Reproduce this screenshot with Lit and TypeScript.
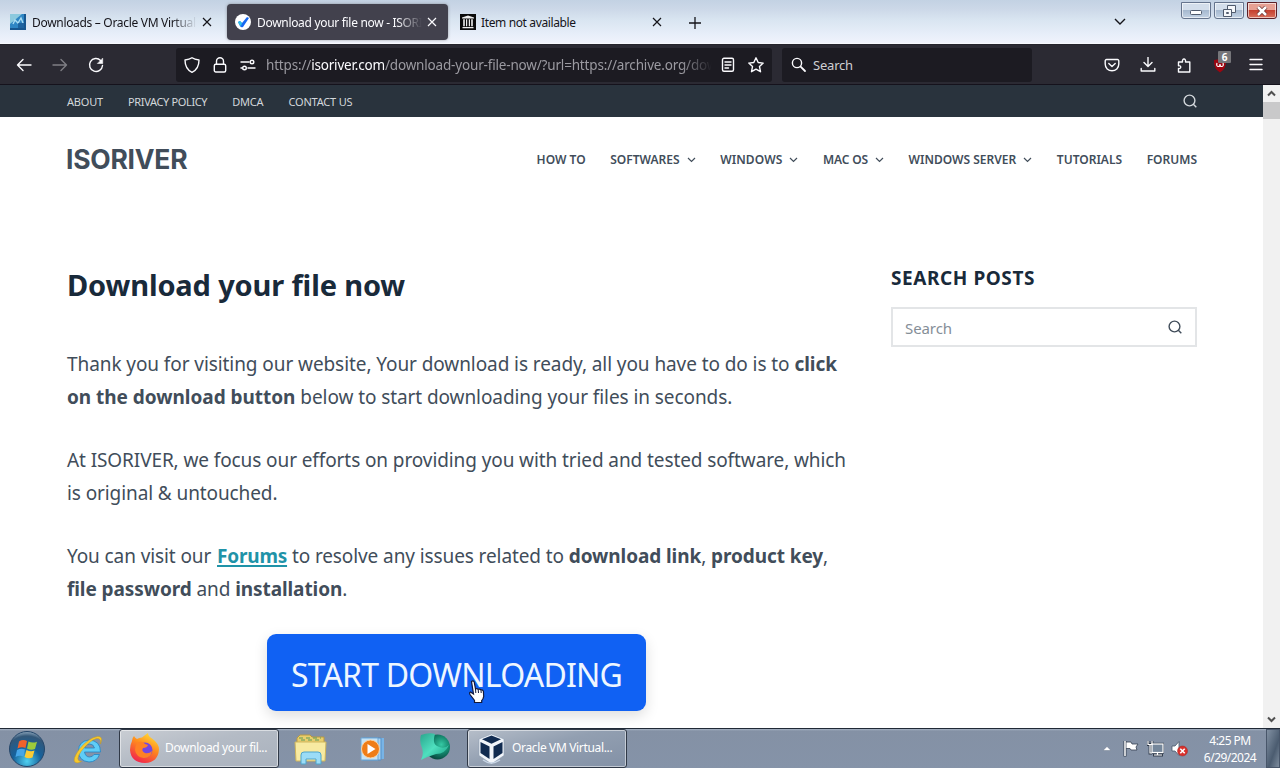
import { LitElement, html, css, svg } from "lit";
import { customElement } from "lit/decorators.js";

const cross = html`<svg class="x" viewBox="0 0 10 10" width="10" height="10"><path d="M1 1l8 8M9 1l-8 8" fill="none" stroke="currentColor" stroke-width="1.2"/></svg>`;
const line = (d: unknown, size = 16) => html`<svg viewBox="0 0 16 16" width=${size} height=${size} fill="none" stroke="currentColor" stroke-width="1.4" stroke-linecap="round" stroke-linejoin="round">${d}</svg>`;

@customElement("browser-tabs")
class BrowserTabs extends LitElement {
  static styles = css`
    :host { display: flex; height: 44px; box-sizing: border-box; padding-top: 4px; color: #15141a; position: relative;
      background: linear-gradient(180deg, #c3d2e3 0, #ccd8e8 9px, #d9e5f1 20px, #e7eef9 34px, #f0f3fc 43px, #fff 44px);
      font: 12px/18px "Noto Sans", sans-serif; }
    .tab { height: 36px; width: 221px; display: flex; align-items: center; box-sizing: border-box; border-radius: 4px; }
    .first { width: 227px; padding-left: 10px; }
    .active { background: #42414d; color: #fbfbfe; padding-left: 8px; box-shadow: 0 0 3px #5558; }
    .last { padding-left: 12px; width: 225px; }
    .icon { width: 16px; height: 16px; margin-right: 6px; flex: none; }
    .label { width: 165px; overflow: hidden; white-space: nowrap; letter-spacing: -0.31px; padding-top: 2px; }
    .last .label { letter-spacing: -0.37px; margin-left: -1px; }
    .fade { mask-image: linear-gradient(90deg, #000 140px, transparent 165px); }
    .x { margin-left: 5px; }
    .last .x { margin-left: 6px; }
    .plus { margin: 13px 0 0 16px; width: 12px; height: 12px; }
    .all { margin: 14px 0 0 auto; width: 12px; height: 8px; }
    .win { display: flex; gap: 3px; margin: -2px 3px 0 55px; }
    .btn { width: 30px; height: 17px; box-sizing: border-box; border: 1px solid #65748d; border-radius: 0 0 3px 3px; box-shadow: inset 0 0 0 1px #fff9;
      background: linear-gradient(#d3deeb 45%, #a6b9cf 50%, #c3d2e4); display: flex; align-items: center; justify-content: center; }
    .min { padding-top: 4px; }
    .close { border-color: #5b2027; background: linear-gradient(#e6a093 45%, #c5402f 50%, #d8705c); }
  `;
  render() {
    return html`
      <div class="tab first">
        <svg class="icon" viewBox="0 0 16 16"><rect width="16" height="16" fill="#2f86c4"/><path d="M0 0h12L0 10z" fill="#8cc9de"/><path d="M3 10l2-4 3 3 3-5 2 5" stroke="#a8dcf2" stroke-width="1.400" fill="none"/><path d="M8 9h8v7H8z" fill="#14508c" opacity=".65"/><path d="M14 0h2v16H0v-2h14z" fill="#17568f"/></svg>
        <span class="label fade">Downloads – Oracle VM VirtualBox</span>${cross}
      </div>
      <div class="tab active">
        <svg class="icon" viewBox="0 0 16 16"><circle cx="8" cy="8" r="8" fill="#fff"/><path d="M3 8l2-1 2 2 5-6 2 1-6 9q-2 1-3-1z" fill="#1768f2"/><path d="M3 8l2-1 2 2-1 3q-2-1-3-4z" fill="#2fc2e8"/></svg>
        <span class="label fade">Download your file now - ISORIVER</span>${cross}
      </div>
      <div class="tab last">
        <svg class="icon" viewBox="0 0 16 16"><rect width="16" height="16" fill="#0a0a0a"/><path d="M2 3.6L8 1.5l6 2.1v.9H2zM2.5 13h11v1.3h-11zM3.2 5.3h1.6v7H3.2zM6 5.3h1.2v7H6zM8.8 5.3H10v7H8.800zM11.2 5.300h1.600v7h-1.600z" fill="#eee"/></svg>
        <span class="label">Item not available</span>${cross}
      </div>
      <svg class="plus" viewBox="0 0 12 12"><path d="M6 0v12M0 6h12" stroke="#15141a" stroke-width="1.3"/></svg>
      <svg class="all" viewBox="0 0 12 8"><path d="M1 1l5 5 5-5" stroke="#15141a" stroke-width="1.4" fill="none"/></svg>
      <div class="win">
        <div class="btn min"><svg width="12" height="5" viewBox="0 0 12 5"><rect x=".5" y=".5" width="11" height="4" rx="1" fill="#fff" stroke="#505b6d"/></svg></div>
        <div class="btn"><svg width="13" height="12" viewBox="0 0 13 12" fill="#f6f8fb" stroke="#505b6d"><path d="M4.500 .5h8v7h-8z"/><path d="M.5 4.500h8v7h-8z"/><path d="M3.500 7.500h2v1h-2z"/></svg></div>
        <div class="btn close"><svg width="12" height="10" viewBox="0 0 12 10"><path d="M2 1l8 8M10 1L2 9" stroke="#69302f" stroke-width="4"/><path d="M2 1l8 8M10 1L2 9" stroke="#fff" stroke-width="2.500"/></svg></div>
      </div>`;
  }
}

@customElement("browser-toolbar")
class BrowserToolbar extends LitElement {
  static styles = css`
    :host { display: flex; align-items: center; height: 41px; box-sizing: border-box; border-top: 1px solid #25242c; border-bottom: 1px solid #15121c;
      background: #2b2a33; color: #fbfbfe; padding: 0 16px; font: 13.5px/20px "Noto Sans", sans-serif; }
    .group { display: flex; gap: 20px; align-items: center; }
    .off { opacity: .4; display: flex; }
    svg { display: block; flex: none; }
    .url { margin-left: 72px; width: 596px; height: 34px; box-sizing: border-box; padding: 0 8px; background: #1c1b22; border-radius: 3px; display: flex; align-items: center; }
    .url .group { gap: 12px; }
    .address { width: 446px; margin: 0 8px 0 10px; white-space: nowrap; overflow: hidden; color: #9b9aa1; letter-spacing: -0.175px; mask-image: linear-gradient(90deg, #000 415px, transparent 446px); }
    .address b { font-weight: 400; color: #fbfbfe; }
    .search { margin-left: 10px; width: 250px; height: 34px; box-sizing: border-box; padding-left: 9px; gap: 6px; background: #1c1b22; border-radius: 3px; display: flex; align-items: center; }
    .search span { font-size: 13px; color: #cfcfd3; letter-spacing: -0.2px; padding-top: 1px; }
    .right { margin: 0 0 0 auto; }
    .blocker { position: relative; display: flex; }
    .badge { position: absolute; left: 6px; top: -6px; width: 13px; height: 12px; background: #76767a; color: #fff; font: bold 10px/12px "Noto Sans", sans-serif; text-align: center; border-radius: 1px; }
  `;
  render() {
    return html`
      <div class="group">
        ${line(svg`<path d="M15 8H1.500M7 2.500L1.500 8 7 13.500"/>`)}
        <span class="off">${line(svg`<path d="M1 8h13.500M9 2.500l5.500 5.500L9 13.500"/>`)}</span>
        ${line(svg`<path d="M12.600 3.400A6.500 6.500 0 1 0 14.500 8.500"/><path d="M14.700 1.500v5h-5z" fill="currentColor" stroke-width=".6"/>`)}
      </div>
      <div class="url">
        <div class="group">
          ${line(svg`<path d="M8 .8c2 1.500 4.500 2 7 2.200 0 6-2 10-7 12.300C3 13 1 9 1 3c2.500-.2 5-.7 7-2.200z"/>`)}
          ${line(svg`<rect x="2.300" y="7.200" width="11.400" height="7.800" rx="1.500"/><path d="M4.500 7V4.300a3.500 3.500 0 0 1 7 0V7"/>`)}
          ${line(svg`<path d="M1 5h8M8 11h7M1 11h1"/><circle cx="12" cy="5" r="1.800"/><circle cx="4.500" cy="11" r="1.800"/>`)}
        </div>
        <span class="address">https://<b>isoriver.com</b>/download-your-file-now/?url=https://archive.org/download</span>
        <div class="group">
          ${line(svg`<rect x="2.500" y="1.300" width="11" height="13" rx="1.500"/><path d="M5 5h6M5 8h6M5 11h3.500"/>`)}
          ${line(svg`<path d="M8 .8l2.200 4.700 5 .6-3.700 3.500 1 5.100L8 12.200l-4.500 2.500 1-5.100L.8 6.100l5-.6z"/>`)}
        </div>
      </div>
      <div class="search">
        ${line(svg`<circle cx="6" cy="6" r="4.600"/><path d="M9.600 9.600L14 14" stroke-width="1.800"/>`)}
        <span>Search</span>
      </div>
      <div class="group right">
        ${line(svg`<path d="M2.500 2.500h11a1.300 1.300 0 0 1 1.300 1.300V7c0 4-3 6.800-6.800 6.800S1.200 11 1.200 7V3.800a1.300 1.300 0 0 1 1.300-1.300zM4.800 6.500L8 9.500l3.200-3"/>`)}
        ${line(svg`<path d="M8 .3v9M4 5.500l4 4 4-4M1.200 11.500v2.500h13.600v-2.500"/>`)}
        ${line(svg`<path d="M2.500 15V11.500c3 .7 3-3.500 0-2.800V5h4C5.700 1 10.300 1 9.500 5h4.300v10z"/>`)}
        <div class="blocker">
          <svg width="16" height="16" viewBox="0 0 16 16"><path d="M2 3q4 0 6-2 2 2 6 2 .5 9-6 12.500Q1.500 12 2 3z" fill="#9d0510"/><path d="M5 6q-1 3.500 1.500 3.500Q8 9.500 8 7q0 2.500 1.500 2.500Q12 9.500 11 6" stroke="#fff" stroke-width="1.200" fill="none"/></svg>
          <span class="badge">6</span>
        </div>
        ${line(svg`<path d="M2 2.500h12M2 7.500h12M2 12.500h12"/>`)}
      </div>`;
  }
}

@customElement("site-page")
class SitePage extends LitElement {
  static styles = css`
    :host { display: block; flex: 1; background: #fff; color: #414d5a; font: 19px/33px "Noto Sans", sans-serif; overflow: hidden; }
    svg { display: block; }
    .strip { height: 32px; background: #29333d; color: #d3d7db; padding: 0 66px 0 67px; display: flex; gap: 25px; align-items: center; font-size: 11px; line-height: 32px; white-space: nowrap; }
    .strip span { letter-spacing: -0.19px; padding-top: 2px; }
    .strip .policy { letter-spacing: -0.35px; }
    .strip svg { margin-left: auto; }
    header { height: 84px; padding: 0 66px 0 66px; display: flex; align-items: center; justify-content: space-between; }
    .logo { font: bold 26.5px/32px Inter, sans-serif; letter-spacing: -0.25px; color: #414d5a; }
    nav { display: flex; gap: 24.6px; font-size: 12px; font-weight: 600; line-height: 20px; padding-top: 1px; }
    nav span { display: flex; align-items: center; gap: 7px; white-space: nowrap; }
    nav .wide { letter-spacing: 0.1px; }
    nav .snug { letter-spacing: -0.13px; }
    .columns { display: flex; padding: 66px 66px 0 67px; height: 461px; }
    .post { width: 780px; margin-right: 44px; }
    h1 { margin: 0; font: bold 29px/36px "Noto Sans", sans-serif; letter-spacing: -0.14px; color: #192a3a; }
    p { margin: 0 0 30px; white-space: nowrap; letter-spacing: -0.098px; }
    h1 + p { margin-top: 45px; letter-spacing: -0.08px; }
    p b { letter-spacing: -0.03px; }
    p.help { letter-spacing: -0.1px; margin-bottom: 28px; }
    p.help b { letter-spacing: -0.08px; }
    p.help .link { letter-spacing: -0.2px; margin-left: 1px; }
    .link { color: #1f93a8; text-decoration: underline; text-decoration-thickness: 2px; text-underline-offset: 2px; }
    .download { position: relative; margin-left: 200px; width: 379px; height: 77px; box-sizing: border-box; padding-top: 3px; background: #1061f3; border-radius: 9px; color: #eef6ff;
      font-size: 32px; line-height: 75px; letter-spacing: -0.78px; text-align: center; box-shadow: 0 5px 14px #0002; }
    .hand { position: absolute; left: 201px; top: 46px; }
    aside { width: 306px; }
    h2 { margin: -1px 0 0; font: bold 19px/24px "Noto Sans", sans-serif; letter-spacing: 0.57px; color: #192a3a; white-space: nowrap; }
    .field { margin-top: 17px; height: 40px; box-sizing: border-box; border: 2px solid #e3e5e7; display: flex; align-items: center; justify-content: space-between; padding: 2px 13px 0 12px; font-size: 15px; color: #858e97; letter-spacing: -0.08px; }
    .field svg { color: #414d5a; margin-top: -2px; }
  `;
  menu(name: string, arrow = false, fit = "") {
    return html`<span class=${fit}>${name}${arrow ? html`<svg width="9" height="6" viewBox="0 0 9 6"><path d="M1 1l3.500 3.500L8 1" fill="none" stroke="currentColor" stroke-width="1.200"/></svg>` : ""}</span>`;
  }
  glass(size: number) {
    return html`<svg width=${size} height=${size} viewBox="0 0 14 14" fill="none" stroke="currentColor" stroke-width="1.400"><circle cx="6.500" cy="6.500" r="5.400"/><path d="M10.300 10.300l3 3"/></svg>`;
  }
  render() {
    return html`
      <div class="strip"><span>ABOUT</span><span class="policy">PRIVACY POLICY</span><span>DMCA</span><span>CONTACT US</span>${this.glass(14)}</div>
      <header>
        <div class="logo">ISORIVER</div>
        <nav>${this.menu("HOW TO")}${this.menu("SOFTWARES", true)}${this.menu("WINDOWS", true, "wide")}${this.menu("MAC OS", true, "snug")}${this.menu("WINDOWS SERVER", true)}${this.menu("TUTORIALS")}${this.menu("FORUMS")}</nav>
      </header>
      <div class="columns">
        <div class="post">
          <h1>Download your file now</h1>
          <p>Thank you for visiting our website, Your download is ready, all you have to do is to <b>click</b><br><b>on the download button</b> below to start downloading your files in seconds.</p>
          <p>At ISORIVER, we focus our efforts on providing you with tried and tested software, which<br>is original &amp; untouched.</p>
          <p class="help">You can visit our <b class="link">Forums</b> to resolve any issues related to <b>download link</b>, <b>product key</b>,<br><b>file password</b> and <b>installation</b>.</p>
          <div class="download">START DOWNLOADING
            <svg class="hand" width="19" height="25" viewBox="0 0 19 25"><path d="M3.500 1.500q1.800-1.500 2.700.5L7.500 9q1.500-1 2.700.3 1.600-.8 2.700.6 2-.5 2.500 1.500l.3 5q-.5 3-2 4v2.100H6.500v-2L2 14.500q-1-2 .5-2.500L5.500 14z" fill="#fff" stroke="#12183a" stroke-width="1.200"/><path d="M7.500 9l.3 4M10.200 9.500l.3 3.500M13 10.200l.2 2.800" stroke="#12183a"/></svg>
          </div>
        </div>
        <aside>
          <h2>SEARCH POSTS</h2>
          <div class="field">Search${this.glass(14)}</div>
        </aside>
      </div>`;
  }
}

@customElement("task-bar")
class TaskBar extends LitElement {
  static styles = css`
    :host { display: flex; height: 40px; box-sizing: border-box; border-top: 1px solid #202936; align-items: center; color: #fff; font: 12px/16px "Noto Sans", sans-serif;
      background: linear-gradient(#a6b2c3 0, #8491a5 2px, #8593a8 100%); }
    svg { display: block; flex: none; }
    .orb { margin-left: 8px; }
    .ie { margin: 0 15px 0 26px; }
    .task { width: 160px; height: 39px; box-sizing: border-box; border: 1px solid #303947; border-radius: 3px; box-shadow: inset 0 0 0 1px #ffffff80; display: flex; align-items: center; padding-left: 9px; gap: 5px; letter-spacing: -0.35px; white-space: nowrap;
      background: linear-gradient(165deg, #b6bec9, #929fb1 45%, #8391a6); }
    .current { background: linear-gradient(165deg, #c9cdd3, #b4bbc5 45%, #a9b1bd); }
    .task span { padding-bottom: 1px; }
    .vbox { padding-left: 8px; }
    .files { margin-left: 15px; }
    .media { margin-left: 32px; }
    .green { margin: -4px 16px 0 34px; }
    .up { margin-left: auto; }
    .flag { margin-left: 11px; }
    .net { margin: 0 7px; }
    .clock { width: 56px; margin: 1px 8px 0 14px; text-align: center; line-height: 17px; letter-spacing: -0.52px; }
    .desk { width: 14px; height: 39px; box-sizing: border-box; border: 1px solid #48566a; background: linear-gradient(110deg, #8190a2, #4b5c70 60%, #7d8c9d); }
  `;
  render() {
    return html`
      <svg class="orb" width="38" height="38" viewBox="0 0 38 38">
        <defs><radialGradient id="o" cx=".5" cy=".85" r=".9"><stop offset="0" stop-color="#4fd0f0"/><stop offset=".45" stop-color="#16619b"/><stop offset=".8" stop-color="#335778"/><stop offset="1" stop-color="#aec3d5"/></radialGradient></defs>
        <circle cx="19" cy="19" r="17.500" fill="url(#o)" stroke="#24466a"/>
        <path d="M11 11.500q4-2.500 8-.5l-1.500 7q-4-1.500-8 .5z" fill="#f0622c"/><path d="M20.500 11.500q4 2 8.500 .2l-2 7.300q-4 1.500-8-.6z" fill="#9ccb3c"/><path d="M9 20q4-2 8-.5l-1.500 7q-4-1.500-8 .5z" fill="#46a6e8"/><path d="M18.500 20q4 2 8 .6l-2 7q-4 1.500-8-.6z" fill="#fccb35"/>
      </svg>
      <svg class="ie" width="32" height="32" viewBox="0 0 31 32">
        <path d="M28 19H12q1 5 5 5 3 0 4.500-2.500H27Q24 29 16.500 29 6 28 6 18T16.500 7Q28 7.500 28 19zM12 15h10q-1-4-5-4t-5 4z" fill="#5fcdf6" stroke="#2183c4" stroke-width=".8"/>
        <path d="M28 11Q31 3 25 3.500 16 5 7 16-1 27 3 29.500q2 1.200 6-1Q2 28 8.500 18.500 17 7.500 24 5.500q5-.5 4 5.500z" fill="#f7c92d" stroke="#c99a1a" stroke-width=".5"/>
      </svg>
      <div class="task current">
        <svg width="31" height="31" viewBox="0 0 31 31">
          <defs><linearGradient id="f" x1=".8" y1="0" x2=".3" y2="1"><stop offset="0" stop-color="#ffe63b"/><stop offset=".45" stop-color="#ff8a1e"/><stop offset="1" stop-color="#f1224d"/></linearGradient></defs>
          <path d="M3 8q0-3 2-5 1 2 3 3 2-1.500 5-1.500Q17 1 19 0q0 3 4 5.500 7 5 7 11Q29 29.500 16 30 2 29.500 1 17q0-5 2-9z" fill="url(#f)"/>
          <circle cx="16" cy="17" r="7.500" fill="#7447e0"/><path d="M8 10q5-3 8 1l3 1q-1 3-5 3-2 3 2 5 4 1 7-2-1 7-8 7-8-1-9-8 0-4 2-7z" fill="#ff8124"/>
        </svg>
        <span>Download your fil...</span>
      </div>
      <svg class="files" width="34" height="32" viewBox="0 0 34 32">
        <path d="M3 5l3-3h10l2 2h12v20H3z" fill="#e9ce6d" stroke="#b89942"/><path d="M5 5h22M7 7h19" stroke="#5b9b5d" stroke-dasharray="4 3"/><path d="M1 9h31l-1 19H2z" fill="#f8eaa1" stroke="#cfb55c"/><path d="M7 31V22q0-3 3-3h14q3 0 3 3v9h-5v-5H12v5z" fill="#9bdcf7" stroke="#4fa5cc"/>
      </svg>
      <svg class="media" width="25" height="26" viewBox="0 0 25 26">
        <path d="M5 2h19v21H5z" fill="#78b4e6"/><path d="M3 2h18v22H3z" fill="#a8d3f2" stroke="#548fc7"/><path d="M1 2h17v22H1z" fill="#c4e2f6" stroke="#6ca7d6"/><circle cx="10.500" cy="13" r="9" fill="#ef7d17" stroke="#fad2a2"/><path d="M7.500 8v10l8-5z" fill="#fff"/>
      </svg>
      <svg class="green" width="32" height="28" viewBox="0 0 32 28">
        <defs><radialGradient id="g" cx=".65" cy=".4" r=".6"><stop offset="0" stop-color="#35c9a4"/><stop offset=".6" stop-color="#128068"/><stop offset="1" stop-color="#0a4c42"/></radialGradient>
        <linearGradient id="h" x2="1" y2="1"><stop offset="0" stop-color="#2aa58d"/><stop offset=".5" stop-color="#4fe0bf"/><stop offset="1" stop-color="#129a7c"/></linearGradient></defs>
        <circle cx="18.500" cy="14" r="12.500" fill="url(#g)"/><path d="M2 2q8-3 14-1-3 9 2 12 7 4 12-1-4 9-13 9-7 2-15 6 3-6 1-12Q0 8 2 2z" fill="url(#h)"/>
      </svg>
      <div class="task vbox">
        <svg width="31" height="32" viewBox="0 0 31 32">
          <path d="M15.500 1L28 6v16.500L15.500 31 3 22.500V6z" fill="#f1f5fa" stroke="#8f9eb2" stroke-width=".6"/><path d="M15.500 2.500L25 6.300l-9.500 4.500L6 6.300zM4.500 9l9 4.500V26l-9-6zM26.500 9l-9 4.500V26l9-6z" fill="#112b50"/><path d="M7 27q8 6 17 0" stroke="#c7d5e6" stroke-width="1.500" fill="none"/>
        </svg>
        <span>Oracle VM Virtual...</span>
      </div>
      <svg class="up" width="8" height="5" viewBox="0 0 8 5"><path d="M0 4.500L4 .5l4 4z" fill="#fff" stroke="#566479" stroke-width=".4"/></svg>
      <svg class="flag" width="18" height="17" viewBox="0 0 18 17"><path d="M3 1v15.500" stroke="#354050" stroke-width="3"/><path d="M4 2h5l1 2h6l-2 3 1 3H9L8 8.500H4z" fill="#fff" stroke="#354050" stroke-width=".8"/><path d="M3 1v15" stroke="#fff" stroke-width="1.500"/></svg>
      <svg class="net" width="17" height="17" viewBox="0 0 17 17"><rect x="5" y="4" width="11" height="8.500" fill="#75879b" stroke="#303b4a" stroke-width="2.400"/><path d="M6 15h10" stroke="#303b4a" stroke-width="3"/><path d="M1 1v3.500h4V1M3 4.500V13h2" fill="none" stroke="#303b4a" stroke-width="2.800"/><rect x="5" y="4" width="11" height="8.500" fill="#75879b" stroke="#fff" stroke-width="1.200"/><path d="M7 15h8M10.500 12v3M1 1v3.500h4V1M3 4.500V13h2" fill="none" stroke="#fff" stroke-width="1.200"/></svg>
      <svg width="17" height="17" viewBox="0 0 17 17"><path d="M1 6h3l4-4.500v14L4 11H1z" fill="#fff" stroke="#48566a" stroke-width=".8"/><circle cx="11.500" cy="11" r="5" fill="#d9302b" stroke="#a22523" stroke-width=".5"/><path d="M9.300 8.800l4.400 4.400M13.700 8.800l-4.400 4.400" stroke="#fff" stroke-width="1.600"/></svg>
      <div class="clock">4:25 PM<br>6/29/2024</div>
      <div class="desk"></div>`;
  }
}

@customElement("app-root")
class AppRoot extends LitElement {
  static styles = css`
    :host { display: flex; flex-direction: column; width: 1280px; height: 768px; overflow: hidden; }
    .view { display: flex; height: 643px; }
    .scroll { width: 17px; background: #f1f1f1; display: flex; flex-direction: column; align-items: center; }
    .scroll svg { margin: 5px 0; }
    .thumb { width: 17px; height: 17px; background: #c9c9ca; }
    .scroll .down { margin: auto 0 5px; }
  `;
  render() {
    return html`
      <browser-tabs></browser-tabs>
      <browser-toolbar></browser-toolbar>
      <div class="view">
        <site-page></site-page>
        <div class="scroll">
          <svg width="9" height="7" viewBox="0 0 9 7"><path d="M1 5.500L4.500 2 8 5.500" fill="none" stroke="#505050" stroke-width="2"/></svg>
          <div class="thumb"></div>
          <svg class="down" width="9" height="7" viewBox="0 0 9 7"><path d="M1 1.500L4.500 5 8 1.500" fill="none" stroke="#505050" stroke-width="2"/></svg>
        </div>
      </div>
      <task-bar></task-bar>`;
  }
}
